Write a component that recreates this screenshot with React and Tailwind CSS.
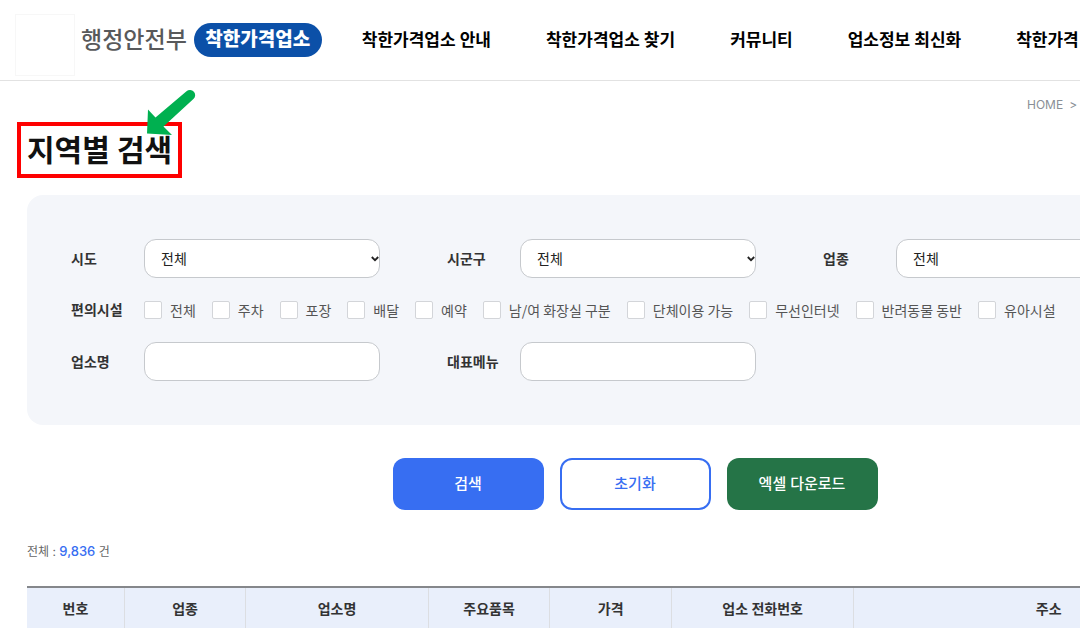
import React, { useState } from "react";

const menus = [
  "착한가격업소 안내",
  "착한가격업소 찾기",
  "커뮤니티",
  "업소정보 최신화",
  "착한가격",
];

const facilities = [
  "전체",
  "주차",
  "포장",
  "배달",
  "예약",
  "남/여 화장실 구분",
  "단체이용 가능",
  "무선인터넷",
  "반려동물 동반",
  "유아시설",
];

const columns = [
  { header: "번호", width: "w-[8%]" },
  { header: "업종", width: "w-[10%]" },
  { header: "업소명", width: "w-[15%]" },
  { header: "주요품목", width: "w-[10%]" },
  { header: "가격", width: "w-[10%]" },
  { header: "업소 전화번호", width: "w-[15%]" },
  { header: "주소", width: "w-[32%]" },
];

const fieldStyle =
  "h-[39px] w-full rounded-xl border border-[#c6c9cd] bg-white px-4 text-sm text-[#222]";

function Header() {
  return (
    <header className="flex h-[81px] items-center border-b border-[#e2e2e2] pl-[15px]">
      <a href="#" className="flex shrink-0 items-center">
        <span className="mt-[10px] h-[62px] w-[60px] border border-[#f7f7f7]" />
        <span className="ml-[6px] text-[23px] font-medium text-[#58595b]">
          행정안전부
        </span>
        <span className="ml-[7px] flex h-[34px] w-32 items-center justify-center rounded-full bg-[#0b50a8] text-[19px] font-black text-white">
          착한가격업소
        </span>
      </a>
      <nav className="ml-10 flex gap-[55px] pt-[2px]">
        {menus.map((menu) => (
          <a
            key={menu}
            href="#"
            className="text-[17px] font-bold whitespace-nowrap text-black"
          >
            {menu}
          </a>
        ))}
      </nav>
    </header>
  );
}

function SelectField({ id, label }) {
  return (
    <div className="flex items-center pr-[67px]">
      <label htmlFor={id} className="w-[73px] shrink-0 font-bold">
        {label}
      </label>
      <div className="relative min-w-0 flex-1">
        <select id={id} className={`${fieldStyle} appearance-none`}>
          <option>전체</option>
        </select>
        <svg
          className="pointer-events-none absolute top-4 right-0"
          width="9"
          height="8"
          viewBox="0 0 9 8"
        >
          <path
            d="M0.8 2L4 5.2L7.2 2"
            fill="none"
            stroke="#222"
            strokeWidth="1.8"
          />
        </svg>
      </div>
    </div>
  );
}

function TextField({ id, label }) {
  return (
    <div className="flex items-center pr-[67px]">
      <label htmlFor={id} className="w-[73px] shrink-0 font-bold">
        {label}
      </label>
      <div className="min-w-0 flex-1">
        <input id={id} type="text" className={fieldStyle} />
      </div>
    </div>
  );
}

function SearchForm() {
  const [checked, setChecked] = useState([]);

  const toggle = (name) => {
    setChecked((prev) =>
      prev.includes(name) ? prev.filter((n) => n !== name) : [...prev, name]
    );
  };

  return (
    <form onSubmit={(e) => e.preventDefault()}>
      <div className="mt-6 grid grid-cols-3 gap-y-3 rounded-2xl bg-[#f4f6fa] p-11 text-sm text-[#333]">
        <SelectField id="sido" label="시도" />
        <SelectField id="sigungu" label="시군구" />
        <SelectField id="category" label="업종" />
        <fieldset className="col-span-3 flex h-10 items-center">
          <legend className="float-left w-[73px] font-bold">편의시설</legend>
          <div className="flex gap-4 font-['Noto_Sans_CJK_KR',sans-serif]">
            {facilities.map((name) => (
              <label
                key={name}
                className="flex items-center gap-2 whitespace-nowrap text-[#555]"
              >
                <input
                  type="checkbox"
                  className="size-[18px] appearance-none rounded-xs border border-[#d3d5d9] bg-white checked:bg-[#376ef2]"
                  checked={checked.includes(name)}
                  onChange={() => toggle(name)}
                />
                {name}
              </label>
            ))}
          </div>
        </fieldset>
        <TextField id="shop" label="업소명" />
        <TextField id="menu" label="대표메뉴" />
      </div>

      <div className="mt-[33px] flex justify-center gap-4 text-[15px] font-medium">
        <button
          type="submit"
          className="h-[52px] w-[151px] rounded-xl bg-[#376ef2] text-white"
        >
          검색
        </button>
        <button
          type="reset"
          onClick={() => setChecked([])}
          className="h-[52px] w-[151px] rounded-xl border-2 border-[#376ef2] bg-white text-[#376ef2]"
        >
          초기화
        </button>
        <button
          type="button"
          className="h-[52px] w-[151px] rounded-xl bg-[#257447] text-white"
        >
          엑셀 다운로드
        </button>
      </div>
    </form>
  );
}

function App() {
  return (
    <div className="min-h-screen overflow-hidden bg-white font-['Inter','Noto_Sans_CJK_KR',sans-serif]">
      <Header />
      <main className="mx-[27px] min-w-[1216px]">
        <div className="flex h-12 items-center pl-[1000px] text-xs text-[#8a8f96]">
          <a href="#">HOME</a>
          <span className="ml-[6px]">&gt;</span>
        </div>
        <div className="flex">
          <div className="relative">
            <h1 className="text-[30px] leading-[42px] font-bold text-[#111]">
              지역별 검색
            </h1>
            {/* highlight around the page title */}
            <span className="absolute -inset-x-[10px] -inset-y-[7px] border-4 border-[#fe0000]" />
            <svg
              className="absolute -top-10 left-[119px]"
              width="50"
              height="47"
              viewBox="0 0 50 47"
            >
              <path
                d="M1 44.5L2 20.5L9.5 28.5L40.5 2.2A5.2 5.2 0 0 1 47.4 10L17.5 37.5L26 46Z"
                fill="#00b050"
              />
            </svg>
          </div>
        </div>
        <SearchForm />
        <p className="mt-8 text-xs leading-[18px] text-[#666]">
          전체 :{" "}
          <span className="text-[13px] font-medium text-[#376ef2]">9,836</span>{" "}
          건
        </p>
        <table className="mt-[25px] w-full table-fixed border-t-2 border-[#85878b] bg-[#e9effb] text-sm text-[#333]">
          <thead>
            <tr>
              {columns.map((col) => (
                <th
                  key={col.header}
                  className={`${col.width} h-[42px] border-l border-[#dcdee2] font-bold first:border-l-0`}
                >
                  {col.header}
                </th>
              ))}
            </tr>
          </thead>
        </table>
      </main>
    </div>
  );
}

export default App;
